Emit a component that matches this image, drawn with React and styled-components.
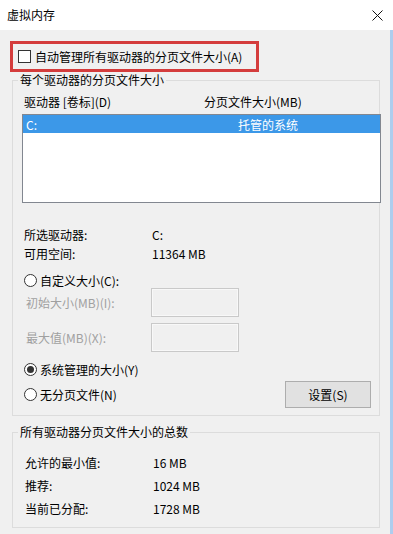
import React from "react";
import styled, { createGlobalStyle } from "styled-components";

const GlobalStyle = createGlobalStyle`
  html, body {
    margin: 0;
    padding: 0;
  }
  body {
    font-family: "Noto Sans CJK SC", "Noto Sans", sans-serif;
    font-size: 12px;
    color: #000;
    background: #f0f0f0;
  }
`;

const Window = styled.div`
  width: 393px;
  height: 534px;
  display: flex;
  flex-direction: column;
  overflow: hidden;
`;

/* 标题栏 */
const TitleBar = styled.div`
  height: 30px;
  flex-shrink: 0;
  background: #fff;
  display: flex;
  align-items: center;
  justify-content: space-between;
  padding: 0 10px 0 7px;
  box-sizing: border-box;
  line-height: 16px;
`;

const CloseButton = styled.span`
  display: flex;
  width: 11px;
  height: 11px;
`;

const Body = styled.div`
  flex: 1;
  background: #f0f0f0;
  border-right: 3px solid #aecdee;
  padding: 11px 0 0 10px;
  box-sizing: border-box;
`;

/* 红框 */
const AutoBox = styled.div`
  width: 249px;
  height: 31px;
  box-sizing: border-box;
  border: 3px solid #d43c3c;
  display: flex;
  align-items: center;
  padding-left: 5px;
  gap: 4px;
  line-height: 16px;
`;

const CheckBox = styled.span`
  width: 13px;
  height: 13px;
  box-sizing: border-box;
  border: 1px solid #333;
  background: #fff;
`;

const Group = styled.fieldset`
  margin: ${(p) => p.$top || 0}px 0 0 2px;
  width: 368px;
  min-width: 0;
  box-sizing: border-box;
  border: 1px solid #dcdcdc;
  padding: 0 0 7px 9px;
`;

const Legend = styled.legend`
  margin-left: -4px;
  padding: 0 2px;
  line-height: 16px;
`;

const HeaderRow = styled.div`
  display: flex;
  margin-top: 6px;
  padding-left: 2px;
  line-height: 16px;
`;

const HeaderCell = styled.span`
  width: ${(p) => p.$w || "auto"};
`;

const ListBox = styled.div`
  margin-top: 4px;
  width: 359px;
  height: 89px;
  box-sizing: border-box;
  border: 1px solid #828790;
  background: #fff;
`;

const ListRow = styled.div`
  height: 18px;
  display: flex;
  align-items: center;
  padding-left: 3px;
  background: ${(p) => (p.$selected ? "#3c98e8" : "transparent")};
  color: ${(p) => (p.$selected ? "#fff" : "#000")};
`;

const ListCell = styled.span`
  width: ${(p) => p.$w || "auto"};
`;

const InfoList = styled.div`
  margin-top: 22px;
`;

const InfoRow = styled.div`
  display: flex;
  align-items: center;
  height: ${(p) => p.$h || 19}px;
  padding-left: ${(p) => p.$pad || 2}px;
`;

const InfoLabel = styled.span`
  width: 128px;
`;

const RadioRow = styled.label`
  display: flex;
  align-items: center;
  height: 20px;
  gap: 3px;
  padding-left: 2px;
  margin-top: ${(p) => p.$top || 0}px;
`;

const RadioCircle = styled.span`
  width: 13px;
  height: 13px;
  box-sizing: border-box;
  border: 1px solid #333;
  border-radius: 50%;
  background: #fff;
  display: flex;
  align-items: center;
  justify-content: center;
`;

const RadioDot = styled.span`
  width: 7px;
  height: 7px;
  border-radius: 50%;
  background: #333;
`;

const SizeRow = styled.div`
  display: flex;
  align-items: center;
  padding-left: 4px;
  margin-top: ${(p) => p.$top || 0}px;
`;

const SizeLabel = styled.span`
  width: 125px;
  color: #a0a0a0;
`;

const SizeInput = styled.span`
  width: 88px;
  height: 29px;
  box-sizing: border-box;
  border: 1px solid #c9c9c9;
  box-shadow: inset 0 0 0 1px #f8f8f8;
  background: #f0f0f0;
`;

const BottomRow = styled.div`
  display: flex;
  align-items: center;
  justify-content: space-between;
  margin-top: 2px;
  height: 27px;
`;

const SetButton = styled.button`
  width: 86px;
  height: 27px;
  margin-right: 8px;
  box-sizing: border-box;
  border: 1px solid #adadad;
  background: #e1e1e1;
  font: inherit;
  color: #000;
  padding: 0;
`;

const TotalList = styled.div`
  padding-top: 11px;
`;

function Radio({ checked, children, top }) {
  return (
    <RadioRow $top={top}>
      <RadioCircle>{checked && <RadioDot />}</RadioCircle>
      <span>{children}</span>
    </RadioRow>
  );
}

export default function App() {
  return (
    <>
      <GlobalStyle />
      <Window>
        <TitleBar>
          <span>虚拟内存</span>
          <CloseButton>
            <svg width="11" height="11" viewBox="0 0 11 11">
              <path d="M0.5 0.5 L10.5 10.5 M10.5 0.5 L0.5 10.5" stroke="#111" strokeWidth="1" fill="none" />
            </svg>
          </CloseButton>
        </TitleBar>
        <Body>
          <AutoBox>
            <CheckBox />
            <span>自动管理所有驱动器的分页文件大小(A)</span>
          </AutoBox>

          <Group>
            <Legend>每个驱动器的分页文件大小</Legend>
            <HeaderRow>
              <HeaderCell $w="180px">驱动器 [卷标](D)</HeaderCell>
              <HeaderCell>分页文件大小(MB)</HeaderCell>
            </HeaderRow>
            <ListBox>
              <ListRow $selected>
                <ListCell $w="212px">C:</ListCell>
                <ListCell>托管的系统</ListCell>
              </ListRow>
            </ListBox>
            <InfoList>
              <InfoRow>
                <InfoLabel>所选驱动器:</InfoLabel>
                <span>C:</span>
              </InfoRow>
              <InfoRow>
                <InfoLabel>可用空间:</InfoLabel>
                <span>11364 MB</span>
              </InfoRow>
            </InfoList>
            <Radio top={7}>自定义大小(C):</Radio>
            <SizeRow $top={-2}>
              <SizeLabel>初始大小(MB)(I):</SizeLabel>
              <SizeInput />
            </SizeRow>
            <SizeRow $top={6}>
              <SizeLabel>最大值(MB)(X):</SizeLabel>
              <SizeInput />
            </SizeRow>
            <Radio checked top={7}>系统管理的大小(Y)</Radio>
            <BottomRow>
              <Radio>无分页文件(N)</Radio>
              <SetButton>设置(S)</SetButton>
            </BottomRow>
          </Group>

          <Group $top={8}>
            <Legend>所有驱动器分页文件大小的总数</Legend>
            <TotalList>
              <InfoRow $h={23} $pad={3}>
                <InfoLabel>允许的最小值:</InfoLabel>
                <span>16 MB</span>
              </InfoRow>
              <InfoRow $h={23} $pad={3}>
                <InfoLabel>推荐:</InfoLabel>
                <span>1024 MB</span>
              </InfoRow>
              <InfoRow $h={23} $pad={3}>
                <InfoLabel>当前已分配:</InfoLabel>
                <span>1728 MB</span>
              </InfoRow>
            </TotalList>
          </Group>
        </Body>
      </Window>
    </>
  );
}
